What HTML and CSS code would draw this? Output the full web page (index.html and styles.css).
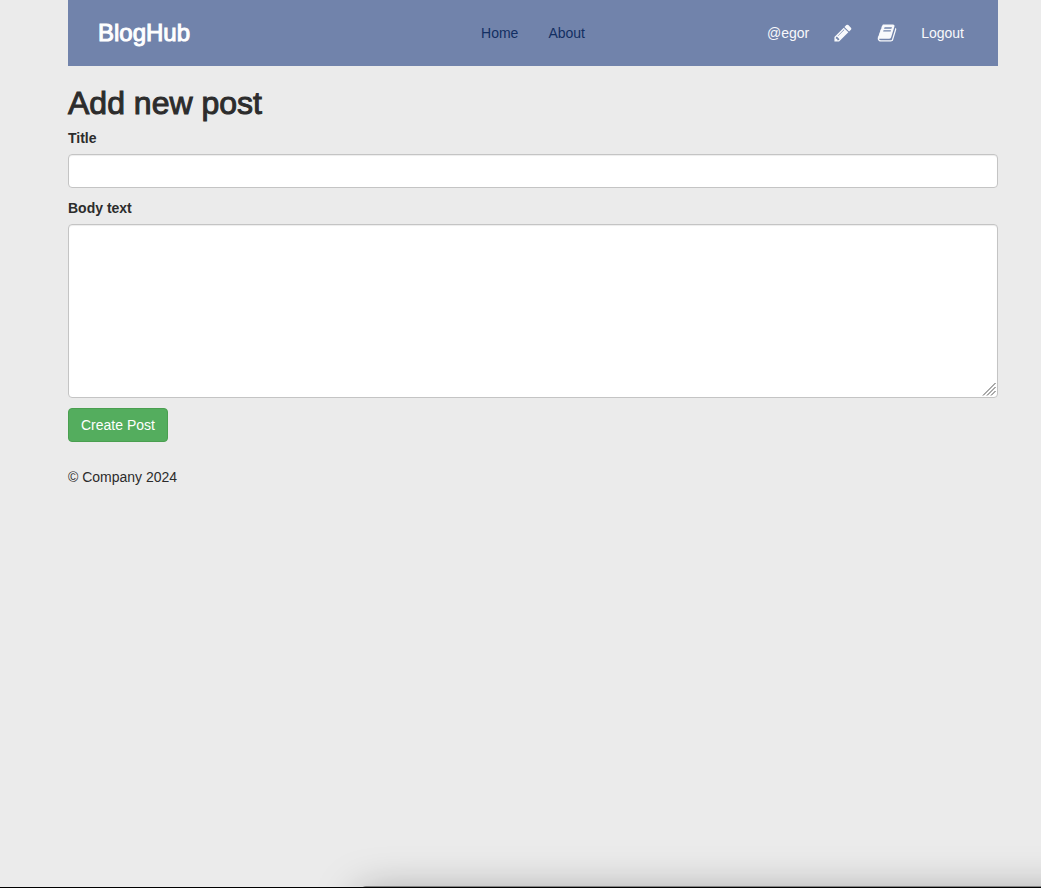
FILE: index.html
```html
<!DOCTYPE html>
<html lang="en">
<head>
<meta charset="utf-8">
<meta name="viewport" content="width=device-width, initial-scale=1">
<title>BlogHub</title>
<link rel="stylesheet" href="styles.css">
</head>
<body>
<div class="page">
  <header class="navbar">
    <a class="brand" href="#">BlogHub</a>
    <nav class="links">
      <a href="#">Home</a>
      <a href="#">About</a>
    </nav>
    <div class="user">
      <a href="#">@egor</a>
      <a class="icon" href="#" aria-label="New post"><svg viewBox="0 0 1792 1792" aria-hidden="true"><path d="M491 1536l91-91-235-235-91 91v107h128v128h107zM1014 608q0-22-22-22-10 0-17 7l-542 542q-7 7-7 17 0 22 22 22 10 0 17-7l542-542q7-7 7-17zM960 416l416 416-832 832h-416v-416zM1643 512q0 53-37 90l-166 166-416-416 166-165q36-38 90-38 53 0 91 38l235 234q37 39 37 91z"/></svg></a>
      <a class="icon" href="#" aria-label="My posts"><svg viewBox="0 0 1792 1792" aria-hidden="true"><path d="M1703 478q40 57 18 129l-275 906q-19 64-76.500 107.500t-122.500 43.500h-923q-77 0-148.500-53.500t-99.500-131.500q-24-67-2-127 0-4 3-27t4-37q1-8-3-21.500t-3-19.500q2-11 8-21t16.500-23.500 16.500-23.500q23-38 45-91.500t30-91.500q3-10 .5-30t-.5-28q3-11 17-28t17-23q21-36 42-92t25-90q1-9-2.500-32t.5-28q4-13 22-30.500t22-22.500q19-26 42.500-84.500t27.500-96.500q1-8-3-25.500t-2-26.500q2-8 9-18t18-23 17-21q8-12 16.500-30.500t15-35 16-36 19.500-32 26.500-23.500 36-11.500 47.500 5.500l-1 3q38-9 51-9h761q74 0 114 56t18 130l-274 906q-36 119-71.500 153.500t-128.500 34.500h-869q-27 0-38 15-11 16-1 43 24 70 144 70h923q29 0 56-15.500t35-41.500l300-987q7-22 5-57 38 15 59 43zm-1064 2q-4 13 2 22.500t20 9.500h608q13 0 25.500-9.500t16.500-22.500l21-64q4-13-2-22.500t-20-9.500h-608q-13 0-25.500 9.500t-16.500 22.500zm-83 256q-4 13 2 22.500t20 9.500h608q13 0 25.500-9.500t16.500-22.500l21-64q4-13-2-22.500t-20-9.500h-608q-13 0-25.500 9.500t-16.500 22.500z"/></svg></a>
      <a href="#">Logout</a>
    </div>
  </header>
  <main>
    <h1 class="heading">Add new post</h1>
    <form class="form">
      <div class="field">
        <label for="title">Title</label>
        <input class="control" id="title" name="title" type="text">
      </div>
      <div class="field">
        <label for="body">Body text</label>
        <div class="area">
          <textarea class="control" id="body" name="body" rows="8"></textarea>
          <svg class="grip" viewBox="0 0 14 14" aria-hidden="true"><path d="M1 13.500L13.500 1M5 13.500L13.500 5M9 13.500L13.500 9"/></svg>
        </div>
      </div>
      <button class="submit" type="button">Create Post</button>
    </form>
  </main>
  <footer class="footer">© Company 2024</footer>
</div>
<div class="edge" aria-hidden="true"><div class="panel"></div></div>
</body>
</html>
```
FILE: styles.css
```css
* { box-sizing: border-box; }

body {
  margin: 0;
  background: #ebebeb;
  color: #2c2c2c;
  font: 14px/20px "Liberation Sans", Arial, sans-serif;
}

.page { margin: 0 43px 0 68px; }

.navbar {
  display: grid;
  grid-template-columns: 1fr auto 1fr;
  align-items: center;
  min-height: 66px;
  background: #7183ab;
}
.navbar a { text-decoration: none; }

.brand {
  padding-left: 30px;
  color: #fff;
  font-size: 24px;
  line-height: 32px;
  -webkit-text-stroke: 1px #fff;
}

.links { display: flex; gap: 30px; }
.links a { color: #132f62; }

.user {
  display: flex;
  align-items: center;
  justify-content: flex-end;
  gap: 24px;
  padding-right: 34px;
}
.user a { color: #f8f9fc; }

.icon svg {
  display: block;
  width: 20px;
  height: 20px;
  fill: currentColor;
}

.heading {
  margin: 20px 0 8px;
  font-size: 32px;
  line-height: 35px;
  font-weight: 500;
  -webkit-text-stroke: 1px #2c2c2c;
}

.form {
  display: flex;
  flex-direction: column;
  align-items: flex-start;
  gap: 10px;
}

.field { width: 100%; }
.field label {
  display: block;
  margin-bottom: 6px;
  font-weight: 700;
}

.heading + .form { margin-top: -1px; }

.control {
  display: block;
  width: 100%;
  margin: 0;
  padding: 6px 12px;
  border: 1px solid #c4c4c4;
  border-radius: 4px;
  background: #fff;
  box-shadow: inset 0 1px 1px rgba(0, 0, 0, .075);
  color: #555;
  font: inherit;
}
textarea.control { resize: vertical; }
textarea.control::-webkit-resizer { background: transparent; }

.area { position: relative; }
.grip {
  position: absolute;
  right: 2px;
  bottom: 2px;
  width: 14px;
  height: 14px;
  fill: none;
  stroke: #555;
  pointer-events: none;
}

.submit {
  padding: 6px 12px;
  border: 1px solid #4a9f50;
  border-radius: 4px;
  background: #54ad5e;
  color: #fff;
  font: inherit;
}

.footer { margin-top: 25px; }

.edge {
  position: fixed;
  inset: auto 0 0 0;
  height: 60px;
  overflow: hidden;
  border-bottom: 1px solid #000;
  pointer-events: none;
}
.panel {
  position: absolute;
  top: 58px;
  left: 360px;
  right: -120px;
  height: 80px;
  border-top: 1px solid #858585;
  border-top-left-radius: 6px;
  box-shadow: 0 8px 44px rgba(0, 0, 0, .35);
}
```
